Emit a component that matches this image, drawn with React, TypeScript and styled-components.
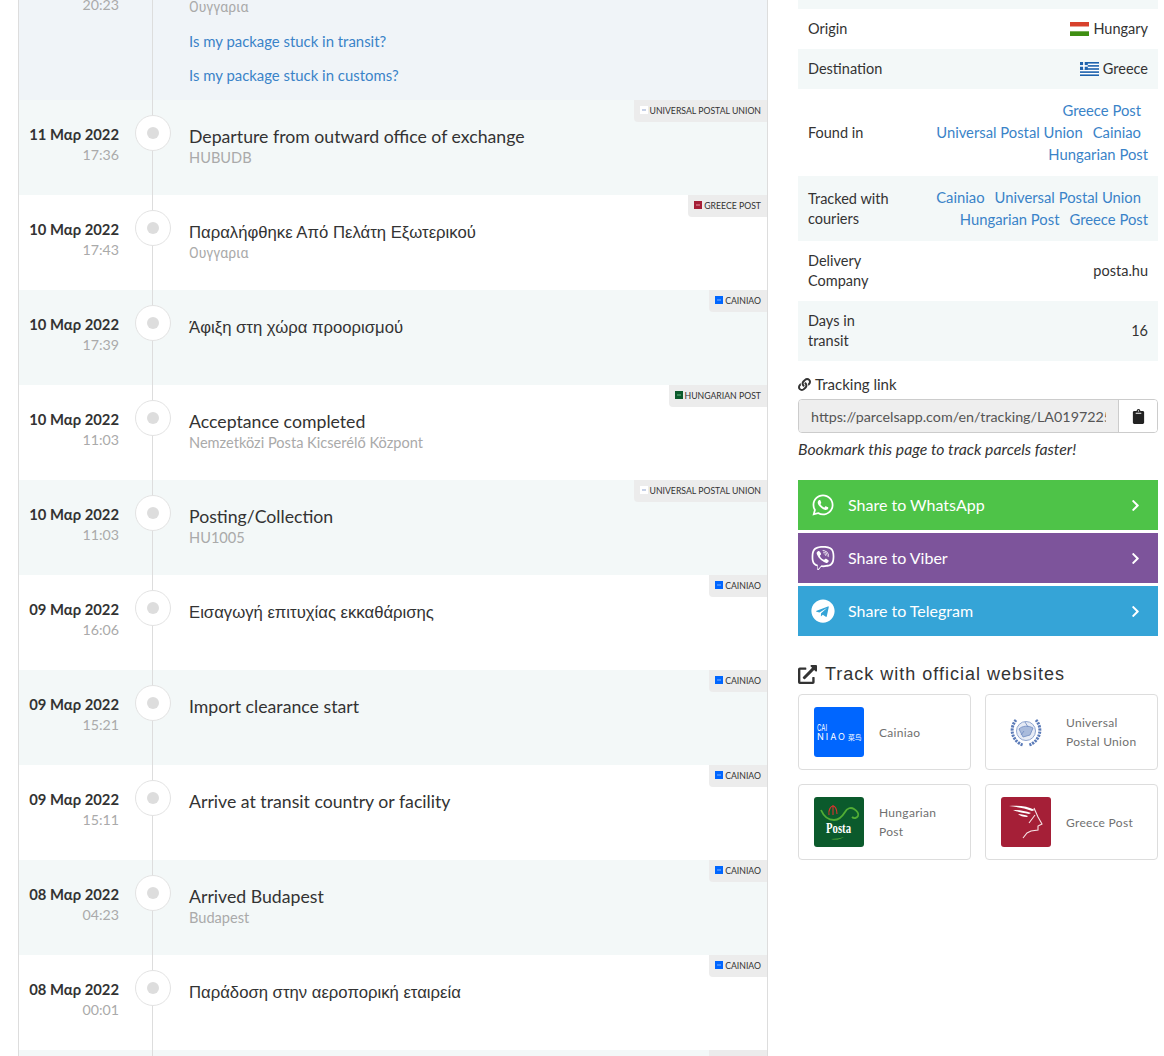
import React from "react";
import styled, { createGlobalStyle } from "styled-components";
import {
  FaWhatsapp,
  FaViber,
  FaTelegram,
  FaLink,
  FaClipboard,
  FaChevronRight,
  FaExternalLinkAlt,
} from "react-icons/fa";

const GlobalStyle = createGlobalStyle`
  html, body {
    margin: 0;
    height: 100%;
    overflow: hidden;
    background: #fff;
    font-family: Lato, "Open Sans", sans-serif;
    color: #333;
  }
`;

const couriers = {
  upu: { name: "UNIVERSAL POSTAL UNION", color: "#fff", mark: "#c5d0e6" },
  greece: { name: "GREECE POST", color: "#a51f37", mark: "#c75a6d" },
  cainiao: { name: "CAINIAO", color: "#0066ff", mark: "#3f8bff" },
  hungarian: { name: "HUNGARIAN POST", color: "#0b5a2c", mark: "#3c8a58" },
};

type CourierKey = keyof typeof couriers;

type EventItem = {
  date?: string;
  time?: string;
  title?: string;
  place?: string;
  greek?: boolean;
  courier: CourierKey;
};

const events: EventItem[] = [
  { date: "11 Μαρ 2022", time: "17:36", title: "Departure from outward office of exchange", place: "HUBUDB", courier: "upu" },
  { date: "10 Μαρ 2022", time: "17:43", title: "Παραλήφθηκε Από Πελάτη Εξωτερικού", place: "Ουγγαρια", greek: true, courier: "greece" },
  { date: "10 Μαρ 2022", time: "17:39", title: "Άφιξη στη χώρα προορισμού", greek: true, courier: "cainiao" },
  { date: "10 Μαρ 2022", time: "11:03", title: "Acceptance completed", place: "Nemzetközi Posta Kicserélő Központ", courier: "hungarian" },
  { date: "10 Μαρ 2022", time: "11:03", title: "Posting/Collection", place: "HU1005", courier: "upu" },
  { date: "09 Μαρ 2022", time: "16:06", title: "Εισαγωγή επιτυχίας εκκαθάρισης", greek: true, courier: "cainiao" },
  { date: "09 Μαρ 2022", time: "15:21", title: "Import clearance start", courier: "cainiao" },
  { date: "09 Μαρ 2022", time: "15:11", title: "Arrive at transit country or facility", courier: "cainiao" },
  { date: "08 Μαρ 2022", time: "04:23", title: "Arrived Budapest", place: "Budapest", courier: "cainiao" },
  { date: "08 Μαρ 2022", time: "00:01", title: "Παράδοση στην αεροπορική εταιρεία", greek: true, courier: "cainiao" },
  { courier: "cainiao" },
];

const HungaryFlag = () => (
  <svg width="19" height="14" viewBox="0 0 19 14">
    <rect width="19" height="4.7" fill="#d8412c" />
    <rect y="4.7" width="19" height="4.6" fill="#fff" />
    <rect y="9.3" width="19" height="4.7" fill="#3f8f13" />
  </svg>
);

const GreeceFlag = () => (
  <svg width="19" height="14" viewBox="0 0 19 14">
    <rect width="19" height="14" fill="#fff" />
    {[0, 3.1, 6.2, 9.3, 12.4].map((y) => (
      <rect key={y} y={y} width="19" height="1.6" fill="#1d62ad" />
    ))}
    <rect width="7.8" height="7.8" fill="#1d62ad" />
    <rect x="3.1" width="1.6" height="7.8" fill="#fff" />
    <rect y="3.1" width="7.8" height="1.6" fill="#fff" />
  </svg>
);

const CainiaoLogo = () => (
  <LogoSvg viewBox="0 0 50 50">
    <rect width="50" height="50" rx="3" fill="#0066ff" />
    <text x="3" y="24" fill="#fff" fontSize="9" textLength="10" lengthAdjust="spacingAndGlyphs" fontFamily="Inter, sans-serif">CAI</text>
    <text x="3" y="33" fill="#fff" fontSize="9" textLength="28" fontFamily="Inter, sans-serif">NIAO</text>
    <text x="34" y="33" fill="#fff" fontSize="6.8" fontFamily="'Noto Sans CJK SC', sans-serif">菜鸟</text>
  </LogoSvg>
);

const UpuLogo = () => (
  <LogoSvg viewBox="0 0 50 50">
    <rect width="50" height="50" fill="#fff" />
    <circle cx="25" cy="24" r="9.5" fill="#e6ebf5" stroke="#8fa5cf" strokeWidth="1" />
    <path d="M18 22c3-3 9-4 14-1l-3 7-7 2zM24 15l3 5M20 28l3-4" fill="#a9bbdc" stroke="#6f8ac0" strokeWidth="0.8" />
    <path d="M15 13a15.5 15.5 0 0 0 7 25M35 13a15.5 15.5 0 0 1-7 25" fill="none" stroke="#5b7bb8" strokeWidth="3" strokeDasharray="2.2 0.9" />
  </LogoSvg>
);

const HungarianLogo = () => (
  <LogoSvg viewBox="0 0 50 50">
    <rect width="50" height="50" rx="3" fill="#0b5a2c" />
    <path d="M7 13c3 7 8 10 13 10s8-3 11-8c2-4 6-5 9-3s5 5 4 7c-1 2-4 3-6 1" fill="none" stroke="#52ad35" strokeWidth="1.8" />
    <path d="M15 18c-1-5 2-9 4-9s4 3 4 8M19 8v10" fill="none" stroke="#d9322e" strokeWidth="1.1" />
    <text x="24.5" y="36" textAnchor="middle" fill="#fff" fontSize="14" fontWeight="700" fontFamily="'Liberation Serif', serif" textLength="25" lengthAdjust="spacingAndGlyphs">Posta</text>
    <path d="M17 42c5 0 10-1 13-2-3 2-8 3.500-13 2z" fill="#5fb53a" />
  </LogoSvg>
);

const GreeceLogo = () => (
  <LogoSvg viewBox="0 0 50 50">
    <rect width="50" height="50" rx="3" fill="#a51f37" />
    <path d="M8 9c9-1 19 0 26 4l-3 1C24 11 15 10 8 9zM12 13c6 0 12 1 18 3l-2 1c-6-1-11-2-16-4zM17 17c4 0 7 1 10 2l-1 1c-4 0-7-1-9-3z" fill="#fff" />
    <path d="M33 11l4 9 4 7-4 2v4l-7 1-4 2-4 5M34 18l-6 8" fill="none" stroke="#f7e4e7" strokeWidth="1.1" />
  </LogoSvg>
);

const Timeline = () => (
  <Main>
    <FirstRow>
      <FirstTime>20:23</FirstTime>
      <MarkerCol />
      <FirstBody>
        <Place $greek>Ουγγαρια</Place>
        <HelpLink>Is my package stuck in transit?</HelpLink>
        <HelpLink>Is my package stuck in customs?</HelpLink>
      </FirstBody>
    </FirstRow>
    {events.map((ev, i) => {
      const c = couriers[ev.courier];
      // the last row is only 6px in view, its badge text lies below the fold
      const blank = !ev.title;
      return (
        <Row key={i} $tinted={i % 2 === 0}>
          <DateCol>
            <DateText>{ev.date}</DateText>
            <TimeText>{ev.time}</TimeText>
          </DateCol>
          <MarkerCol>
            <Circle>
              <Dot />
            </Circle>
          </MarkerCol>
          <Body>
            <Title $greek={ev.greek}>{ev.title}</Title>
            {ev.place && <Place $greek={ev.greek}>{ev.place}</Place>}
          </Body>
          <Badge $blank={blank}>
            {!blank && <BadgeMark $color={c.color} $mark={c.mark} />}
            {!blank && c.name}
          </Badge>
        </Row>
      );
    })}
  </Main>
);

const Sidebar = () => (
  <Side>
    <InfoTable>
      <InfoRow $tinted $height={9} />
      <InfoRow $height={40}>
        <InfoLabel>Origin</InfoLabel>
        <InfoValue>
          <HungaryFlag /> Hungary
        </InfoValue>
      </InfoRow>
      <InfoRow $tinted $height={40}>
        <InfoLabel>Destination</InfoLabel>
        <InfoValue>
          <GreeceFlag /> Greece
        </InfoValue>
      </InfoRow>
      <InfoRow $flush $height={87}>
        <InfoLabel>Found in</InfoLabel>
        <LinkCell>
          <LinkLine><CourierLink>Greece Post</CourierLink><Trail /></LinkLine>
          <LinkLine><CourierLink>Universal Postal Union</CourierLink><CourierLink>Cainiao</CourierLink><Trail /></LinkLine>
          <LinkLine><CourierLink>Hungarian Post</CourierLink></LinkLine>
        </LinkCell>
      </InfoRow>
      <InfoRow $flush $tinted $height={65}>
        <InfoLabel $narrow>Tracked with couriers</InfoLabel>
        <LinkCell>
          <LinkLine><CourierLink>Cainiao</CourierLink><CourierLink>Universal Postal Union</CourierLink><Trail /></LinkLine>
          <LinkLine><CourierLink>Hungarian Post</CourierLink><CourierLink>Greece Post</CourierLink></LinkLine>
        </LinkCell>
      </InfoRow>
      <InfoRow $height={60}>
        <InfoLabel $narrow>Delivery Company</InfoLabel>
        <InfoValue>posta.hu</InfoValue>
      </InfoRow>
      <InfoRow $tinted $height={60}>
        <InfoLabel $narrow>Days in transit</InfoLabel>
        <InfoValue>16</InfoValue>
      </InfoRow>
    </InfoTable>

    <LinkLabel>
      <FaLink size={13} /> Tracking link
    </LinkLabel>
    <InputGroup>
      <UrlInput readOnly value="https://parcelsapp.com/en/tracking/LA019722595HU" />
      <CopyButton>
        <FaClipboard size={15} />
      </CopyButton>
    </InputGroup>
    <Bookmark>Bookmark this page to track parcels faster!</Bookmark>

    <ShareList>
      <ShareButton $color="#4ec348">
        <ShareIcon><FaWhatsapp size={24} /></ShareIcon>
        Share to WhatsApp
        <Chevron><FaChevronRight size={13} /></Chevron>
      </ShareButton>
      <ShareButton $color="#7d549b">
        <ShareIcon><FaViber size={24} /></ShareIcon>
        Share to Viber
        <Chevron><FaChevronRight size={13} /></Chevron>
      </ShareButton>
      <ShareButton $color="#35a4d7">
        <ShareIcon><FaTelegram size={24} /></ShareIcon>
        Share to Telegram
        <Chevron><FaChevronRight size={13} /></Chevron>
      </ShareButton>
    </ShareList>

    <SectionTitle>
      <FaExternalLinkAlt size={19} /> Track with official websites
    </SectionTitle>
    <CardGrid>
      <Card><CainiaoLogo /><CardName>Cainiao</CardName></Card>
      <Card><UpuLogo /><CardName>Universal Postal Union</CardName></Card>
      <Card><HungarianLogo /><CardName>Hungarian Post</CardName></Card>
      <Card><GreeceLogo /><CardName>Greece Post</CardName></Card>
    </CardGrid>
  </Side>
);

export default function App() {
  return (
    <>
      <GlobalStyle />
      <Page>
        <Timeline />
        <Sidebar />
      </Page>
    </>
  );
}

const Page = styled.div`
  display: flex;
  gap: 30px;
  height: 1056px;
  padding-left: 18px;
  overflow: hidden;
`;

const Main = styled.div`
  width: 748px;
  flex: none;
  border-left: 1px solid #ddd;
  border-right: 1px solid #ddd;
`;

const Row = styled.div<{ $tinted?: boolean }>`
  position: relative;
  display: grid;
  grid-template-columns: 100px 36px 1fr;
  column-gap: 16px;
  height: 95px;
  background: ${(p) => (p.$tinted ? "#f3f8f8" : "#fff")};
`;

const FirstRow = styled(Row)`
  grid-template-rows: 100px;
  height: 100px;
  background: #f0f4f8;
  overflow: hidden;
`;

const DateCol = styled.div`
  padding-top: 24px;
  text-align: right;
`;

const DateText = styled.div`
  min-height: 21px;
  font-size: 14.8px;
  font-weight: 700;
  line-height: 20px;
  white-space: nowrap;
  color: #333;
`;

const TimeText = styled.div`
  font-size: 14.2px;
  line-height: 20px;
  color: #aaa;
`;

const FirstTime = styled(TimeText)`
  align-self: end;
  padding-bottom: 85px;
  text-align: right;
`;

const MarkerCol = styled.div`
  position: relative;
  display: flex;
  justify-content: center;
  padding-top: 15px;

  &::before {
    content: "";
    position: absolute;
    top: 0;
    bottom: 0;
    left: 17px;
    width: 1px;
    background: #ddd;
  }
`;

const Circle = styled.div`
  position: relative;
  display: flex;
  align-items: center;
  justify-content: center;
  width: 34px;
  height: 34px;
  border: 1px solid #e3e3e3;
  border-radius: 50%;
  background: #fff;
`;

const Dot = styled.div`
  width: 12px;
  height: 12px;
  border-radius: 50%;
  background: #ddd;
`;

const Body = styled.div`
  padding: 26px 0 0 2px;
`;

const FirstBody = styled.div`
  align-self: end;
  display: flex;
  flex-direction: column;
  gap: 14px;
  padding: 0 0 15px 2px;
`;

const Title = styled.div<{ $greek?: boolean }>`
  padding-top: ${(p) => (p.$greek ? "1px" : "0")};
  margin-bottom: ${(p) => (p.$greek ? "-1px" : "0")};
  font-family: ${(p) => (p.$greek ? '"Liberation Sans", sans-serif' : "inherit")};
  font-size: ${(p) => (p.$greek ? "16.7px" : "17.7px")};
  line-height: 22px;
  color: #333;
`;

const Place = styled.div<{ $greek?: boolean }>`
  font-family: ${(p) => (p.$greek ? "Roboto, sans-serif" : "inherit")};
  font-size: ${(p) => (p.$greek ? "14px" : "14.6px")};
  line-height: 20px;
  color: #aaa;
`;

const HelpLink = styled.a`
  font-size: 14.9px;
  line-height: 20px;
  color: #3a83c8;
`;

const Badge = styled.div<{ $blank?: boolean }>`
  position: absolute;
  top: 0;
  right: 0;
  display: flex;
  align-items: center;
  gap: 2px;
  box-sizing: border-box;
  width: ${(p) => (p.$blank ? "58px" : "auto")};
  height: 22px;
  padding: 0 6px 2px;
  border-bottom-left-radius: 4px;
  background: #ececec;
  font-size: 8.7px;
  color: #333;
`;

const BadgeMark = styled.span<{ $color: string; $mark: string }>`
  width: 8px;
  height: 8px;
  background: linear-gradient(${(p) => p.$mark}, ${(p) => p.$mark}) center / 4px 2px no-repeat ${(p) => p.$color};
`;

const Side = styled.div`
  width: 360px;
  flex: none;
`;

const InfoTable = styled.div`
  font-size: 14.5px;
`;

const InfoRow = styled.div<{ $tinted?: boolean; $flush?: boolean; $height: number }>`
  display: flex;
  align-items: center;
  justify-content: space-between;
  box-sizing: border-box;
  height: ${(p) => p.$height}px;
  padding: 0 10px ${(p) => (p.$height > 9 && !p.$flush ? "1px" : "0")};
  background: ${(p) => (p.$tinted ? "#f3f8f8" : "#fff")};
`;

const InfoLabel = styled.div<{ $narrow?: boolean }>`
  width: ${(p) => (p.$narrow ? "90px" : "auto")};
  line-height: 20px;
  white-space: ${(p) => (p.$narrow ? "normal" : "nowrap")};
`;

const InfoValue = styled.div`
  display: flex;
  align-items: center;
  gap: 4px;
`;

const LinkCell = styled.div`
  display: flex;
  flex-direction: column;
  align-items: flex-end;
  margin-bottom: 2px;
  font-size: 14.8px;
  line-height: 22px;
`;

const LinkLine = styled.div`
  display: flex;
  gap: 10px;
`;

const Trail = styled.span`
  width: 0;
  margin-left: -10px;
  padding-right: 7px;
`;

const CourierLink = styled.a`
  color: #3a83c8;
`;

const LinkLabel = styled.div`
  display: flex;
  align-items: center;
  gap: 4px;
  margin-top: 13px;
  font-size: 15px;
  line-height: 20px;
`;

const InputGroup = styled.div`
  display: flex;
  height: 34px;
  margin-top: 5px;
  border: 1px solid #ccc;
  border-radius: 4px;
  box-sizing: border-box;
  overflow: hidden;
`;

const UrlInput = styled.input`
  flex: 1;
  min-width: 0;
  padding: 0 12px;
  border: 0;
  border-right: 1px solid #ccc;
  outline: none;
  background: #eee;
  font-family: inherit;
  font-size: 14.3px;
  color: #555;
`;

const CopyButton = styled.div`
  display: flex;
  align-items: center;
  justify-content: center;
  width: 38px;
  background: #fff;
  color: #222;
`;

const Bookmark = styled.div`
  margin-top: 6px;
  font-size: 15.8px;
  font-style: italic;
  line-height: 20px;
`;

const ShareList = styled.div`
  display: flex;
  flex-direction: column;
  gap: 3px;
  margin-top: 21px;
`;

const ShareButton = styled.div<{ $color: string }>`
  display: flex;
  align-items: center;
  box-sizing: border-box;
  height: 50px;
  padding: 0 16px 2px 13px;
  background: ${(p) => p.$color};
  font-size: 16px;
  color: #fff;
`;

const ShareIcon = styled.span`
  display: flex;
  justify-content: center;
  width: 24px;
  margin: 2px 13px 0 0;
`;

const Chevron = styled.span`
  display: flex;
  margin: 2px 0 0 auto;
`;

const SectionTitle = styled.div`
  display: flex;
  align-items: center;
  gap: 8px;
  margin-top: 26px;
  font-family: "Liberation Sans", sans-serif;
  font-size: 18px;
  line-height: 24px;
  letter-spacing: 1px;
`;

const CardGrid = styled.div`
  display: grid;
  grid-template-columns: 173px 173px;
  column-gap: 14px;
  row-gap: 14px;
  margin-top: 8px;
`;

const Card = styled.div`
  display: flex;
  align-items: center;
  gap: 15px;
  box-sizing: border-box;
  height: 76px;
  padding: 0 15px;
  border: 1px solid #ddd;
  border-radius: 4px;
`;

const LogoSvg = styled.svg`
  flex: none;
  width: 50px;
  height: 50px;
`;

const CardName = styled.div`
  font-size: 12px;
  line-height: 19px;
  letter-spacing: 0.3px;
  color: #707070;
`;
